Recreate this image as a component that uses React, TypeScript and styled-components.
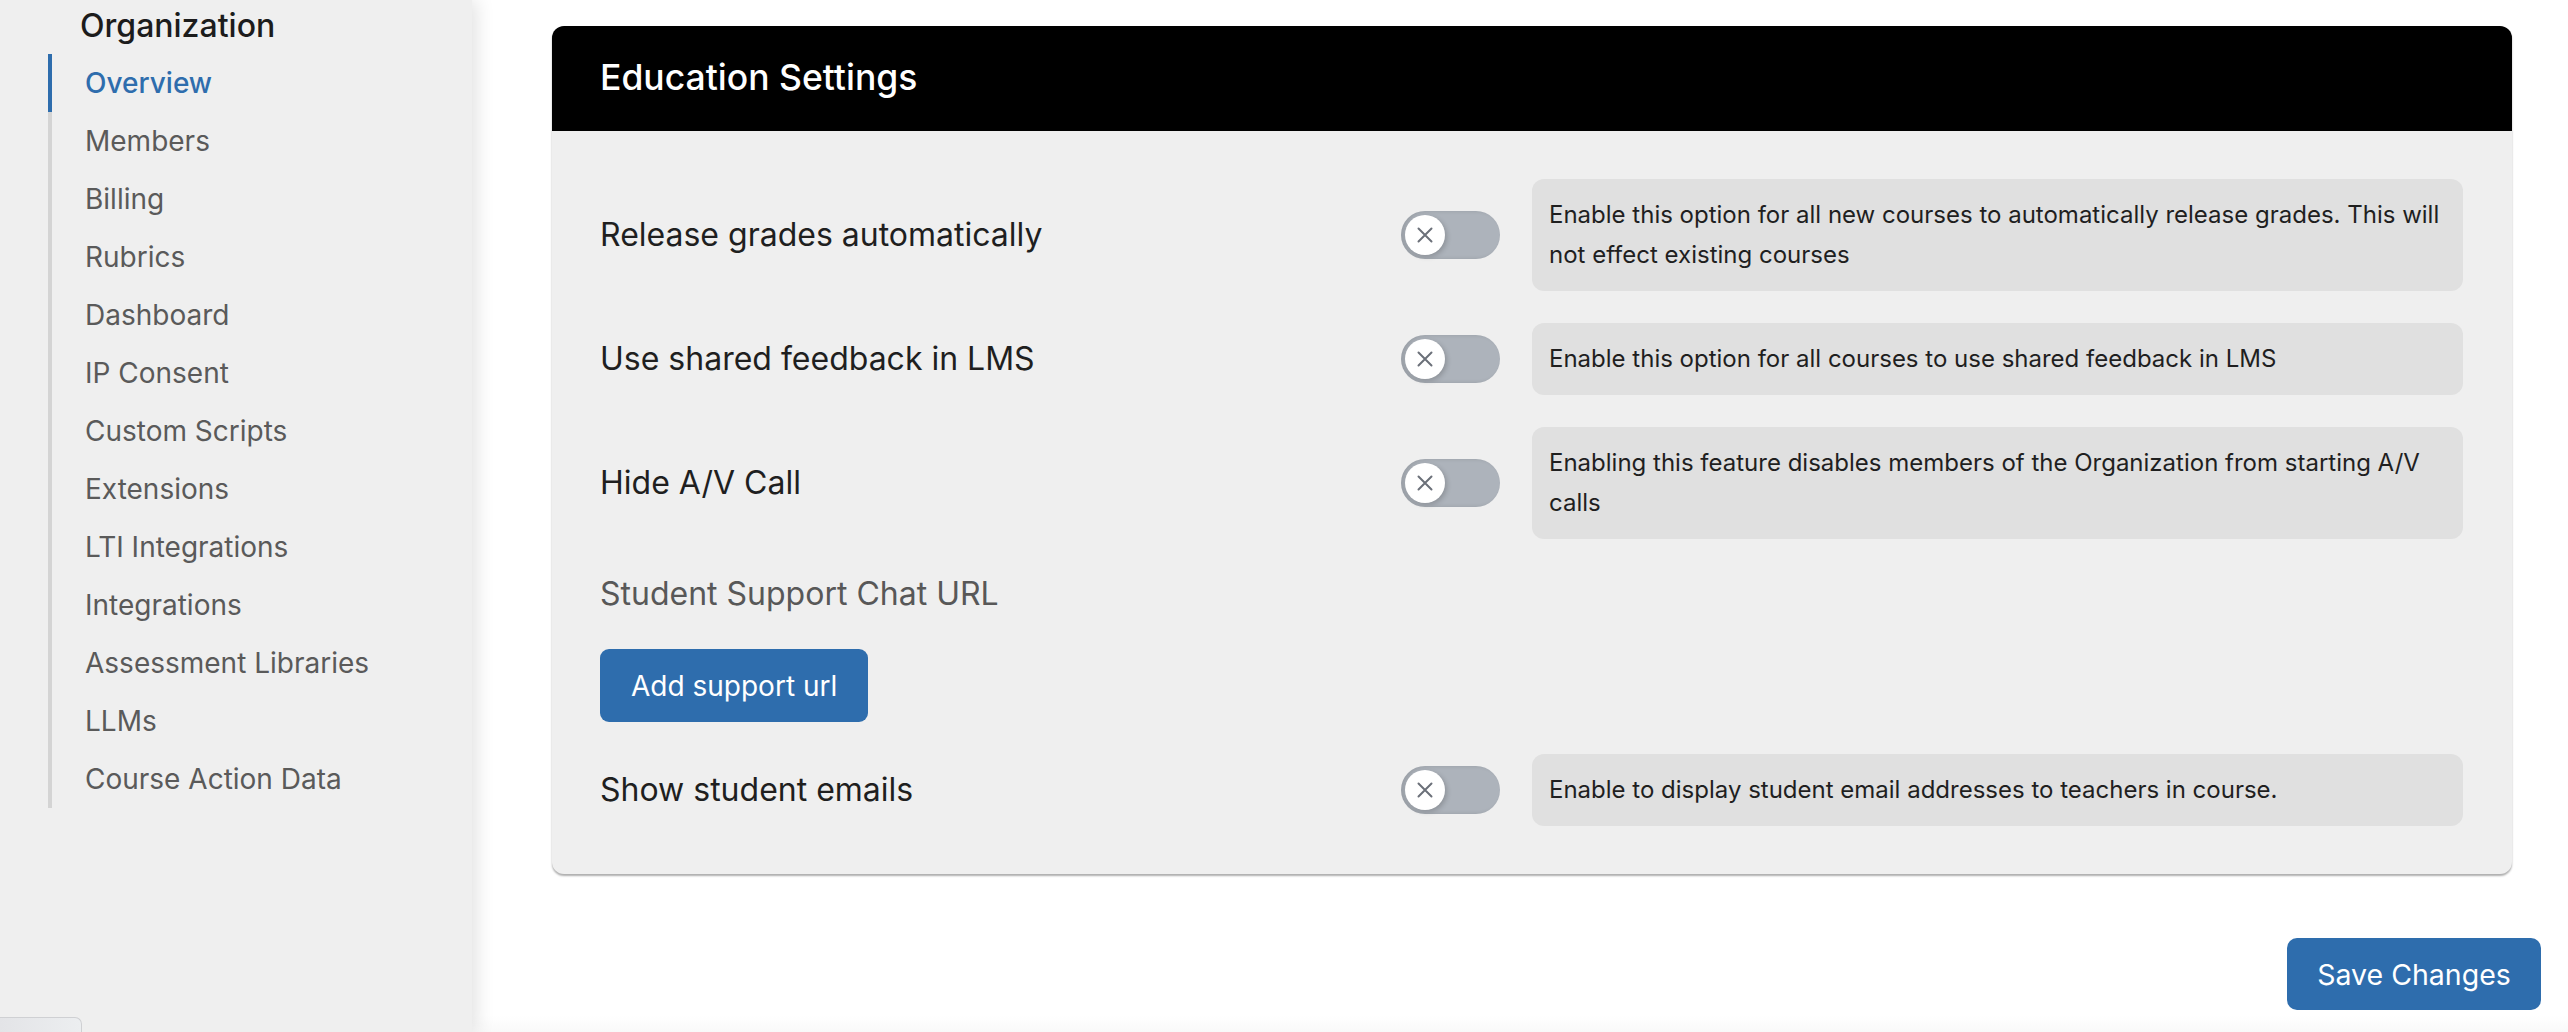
import styled, { createGlobalStyle } from "styled-components";

interface Setting {
  id: string;
  label: string;
  help: string;
}

const NAV_ITEMS = [
  "Overview",
  "Members",
  "Billing",
  "Rubrics",
  "Dashboard",
  "IP Consent",
  "Custom Scripts",
  "Extensions",
  "LTI Integrations",
  "Integrations",
  "Assessment Libraries",
  "LLMs",
  "Course Action Data",
];

const TOP_SETTINGS: Setting[] = [
  {
    id: "release",
    label: "Release grades automatically",
    help: "Enable this option for all new courses to automatically release grades. This will not effect existing courses",
  },
  {
    id: "shared",
    label: "Use shared feedback in LMS",
    help: "Enable this option for all courses to use shared feedback in LMS",
  },
  {
    id: "av",
    label: "Hide A/V Call",
    help: "Enabling this feature disables members of the Organization from starting A/V calls",
  },
];

const EMAIL_SETTING: Setting = {
  id: "emails",
  label: "Show student emails",
  help: "Enable to display student email addresses to teachers in course.",
};

function Toggle() {
  return (
    <Track role="switch" aria-checked={false}>
      <Knob>
        <svg width="18" height="18" viewBox="0 0 18 18" fill="none">
          <path d="M2.5 2.5L15.5 15.5M15.5 2.5L2.5 15.5" stroke="#6b7079" strokeWidth="2" strokeLinecap="round" />
        </svg>
      </Knob>
    </Track>
  );
}

function SettingRow({ setting }: { setting: Setting }) {
  return (
    <Row>
      <RowLabel>{setting.label}</RowLabel>
      <Toggle />
      <HelpBox>{setting.help}</HelpBox>
    </Row>
  );
}

export default function App() {
  return (
    <>
      <GlobalStyle />
      <Page>
        <Sidebar>
          <SideTitle>Organization</SideTitle>
          <NavList>
            {NAV_ITEMS.map((item, i) => (
              <NavItem key={item} $active={i === 0}>
                {item}
              </NavItem>
            ))}
          </NavList>
          <CornerTab />
        </Sidebar>

        <Main>
          <Card>
            <CardHeader>
              <CardTitle>Education Settings</CardTitle>
            </CardHeader>
            <CardBody>
              {TOP_SETTINGS.map((s) => (
                <SettingRow key={s.id} setting={s} />
              ))}
              <SupportLabel>Student Support Chat URL</SupportLabel>
              <div>
                <PrimaryButton>Add support url</PrimaryButton>
              </div>
              <SettingRow setting={EMAIL_SETTING} />
            </CardBody>
          </Card>

          <Actions>
            <SaveButton>Save Changes</SaveButton>
          </Actions>
          <FooterFade />
        </Main>
      </Page>
    </>
  );
}

const GlobalStyle = createGlobalStyle`
  * { box-sizing: border-box; }
  html, body {
    margin: 0;
    padding: 0;
    background: #ffffff;
    font-family: Inter, "Noto Sans", "Liberation Sans", sans-serif;
    overflow: hidden;
  }
`;

const Page = styled.div`
  display: flex;
  width: 2568px;
  height: 1032px;
  overflow: hidden;
`;

const Sidebar = styled.aside`
  position: relative;
  z-index: 2;
  flex: 0 0 472px;
  height: 100%;
  background: #efefef;
  box-shadow: 4px 0 18px rgb(0 0 0 / 0.12);
`;

const SideTitle = styled.h2`
  margin: 0 0 2px 80px;
  color: #1c1c1c;
  font-size: 32px;
  font-weight: 500;
  line-height: 52px;
`;

const NavList = styled.nav`
  display: flex;
  flex-direction: column;
  margin-left: 48px;
  border-left: 4px solid #d4d4d4;
`;

const NavItem = styled.a<{ $active: boolean }>`
  display: block;
  height: 58px;
  margin-left: -4px;
  padding-left: 33px;
  border-left: 4px solid ${({ $active }) => ($active ? "#2e6dad" : "transparent")};
  color: ${({ $active }) => ($active ? "#2e6dad" : "#5a5a5a")};
  font-size: 28px;
  font-weight: ${({ $active }) => ($active ? 500 : 400)};
  line-height: 58px;
  cursor: pointer;
`;

const CornerTab = styled.div`
  position: absolute;
  left: 0;
  bottom: 0;
  width: 82px;
  height: 15px;
  border: 1px solid #cfd0d3;
  border-left: 0;
  border-bottom: 0;
  border-radius: 0 7px 0 0;
  background: linear-gradient(90deg, #e3e4e7, #eceef0);
`;

const Main = styled.main`
  position: relative;
  flex: 1;
  display: flex;
  flex-direction: column;
  padding: 26px 27px 0 80px;
  background: #ffffff;
`;

const Card = styled.section`
  margin-right: 29px;
  border-radius: 12px;
  background: #efefef;
  box-shadow: 0 2px 2px rgb(0 0 0 / 0.32);
  overflow: hidden;
`;

const CardHeader = styled.header`
  display: flex;
  align-items: center;
  height: 105px;
  padding-left: 48px;
  background: #000000;
`;

const CardTitle = styled.h1`
  margin: 0;
  color: #ffffff;
  font-size: 35.5px;
  font-weight: 500;
  line-height: 1.2;
`;

const CardBody = styled.div`
  display: flex;
  flex-direction: column;
  gap: 32px;
  padding: 48px 49px 48px 48px;
`;

const Row = styled.div`
  display: grid;
  grid-template-columns: 1fr auto 931px;
  align-items: center;
  column-gap: 32px;
`;

const RowLabel = styled.span`
  color: #1f1f1f;
  font-size: 32px;
  line-height: 1.3;
`;

const Track = styled.div`
  position: relative;
  width: 99px;
  height: 48px;
  border-radius: 24px;
  background: #adb3bb;
  box-shadow: inset 3px 0 4px rgb(0 0 0 / 0.12);
`;

const Knob = styled.span`
  position: absolute;
  top: 4px;
  left: 4px;
  display: flex;
  align-items: center;
  justify-content: center;
  width: 40px;
  height: 40px;
  border-radius: 50%;
  background: #ffffff;
  box-shadow: 2px 2px 5px rgb(0 0 0 / 0.18);
`;

const HelpBox = styled.p`
  margin: 0;
  padding: 16px 17px;
  border-radius: 12px;
  background: #e0e0e0;
  color: #1f1f1f;
  font-size: 24px;
  line-height: 40px;
`;

const SupportLabel = styled.h3`
  margin: 0;
  color: #585858;
  font-size: 32px;
  font-weight: 400;
  line-height: 46px;
`;

const PrimaryButton = styled.button`
  height: 73px;
  padding: 0 31px;
  border: 0;
  border-radius: 9px;
  background: #2e6dad;
  color: #ffffff;
  font-family: inherit;
  font-size: 28px;
  font-weight: 400;
  cursor: pointer;
`;

const Actions = styled.div`
  display: flex;
  justify-content: flex-end;
  margin-top: 64px;
`;

const SaveButton = styled(PrimaryButton)`
  width: 254px;
  height: 72px;
  padding: 0;
  border-radius: 10px;
  font-size: 28.5px;
`;

const FooterFade = styled.div`
  position: absolute;
  left: 0;
  right: 0;
  bottom: 0;
  height: 16px;
  background: linear-gradient(180deg, #ffffff, #f9f9f9);
  pointer-events: none;
`;
